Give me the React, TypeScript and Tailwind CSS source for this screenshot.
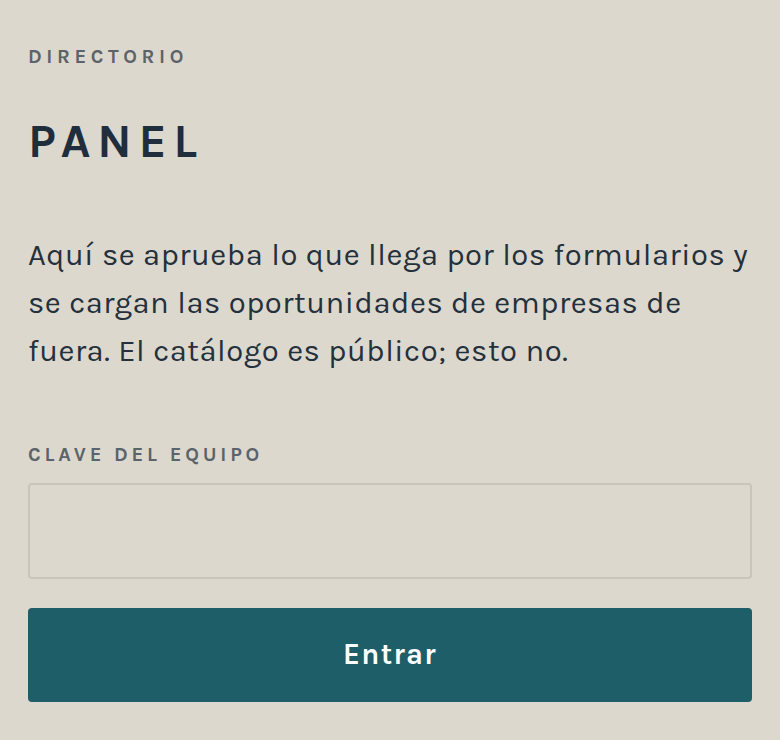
export default function App() {
  return (
    <div className="min-h-[740px] bg-[#dcd8cd] px-[28px] pt-[44px] font-['Karla','Noto_Sans',sans-serif] text-[#1f2d3d]">
      <p className="text-[20px] font-bold tracking-[0.23em] text-[#5b636a] leading-[26px]">DIRECTORIO</p>
      <h1 className="mt-[43px] text-[48px] font-bold tracking-[0.14em] leading-[56px]">PANEL</h1>
      <p className="mt-[62px] text-[31px] leading-[48px] tracking-[0.017em] text-[#24303c]">
        Aquí se aprueba lo que llega por los formularios y se cargan las oportunidades de empresas de fuera. El catálogo es público; esto no.
      </p>
      <label className="mt-[67px] block text-[20px] font-bold tracking-[0.19em] text-[#5b636a] leading-[26px]">CLAVE DEL EQUIPO</label>
      <input type="password" className="mt-[15px] block h-[96px] w-full rounded-[4px] border-2 border-[#c9c5ba] bg-transparent outline-none" />
      <button className="mt-[29px] flex h-[94px] w-full items-center justify-center rounded-[4px] bg-[#1d5e68] text-[29px] font-bold tracking-[0.045em] text-white">
        Entrar
      </button>
    </div>
  );
}
